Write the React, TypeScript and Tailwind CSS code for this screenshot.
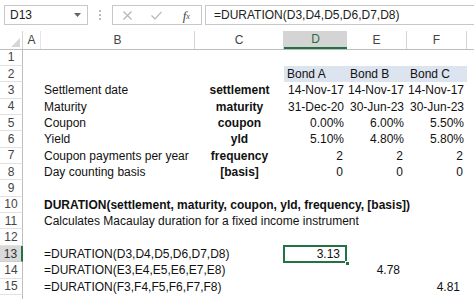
import React from "react";

const ROW_H = "h-[16.36px]";

type Cell = { text?: string; align?: "l" | "r" | "c"; bold?: boolean; fill?: boolean; pr?: string };

function CellBox({ w, c, extra }: { w: string; c?: Cell; extra?: React.ReactNode }) {
  const align = c?.align === "r" ? "justify-end" : c?.align === "c" ? "justify-center" : "justify-start";
  return (
    <div
      className={`${w} shrink-0 relative flex items-center whitespace-nowrap overflow-visible ${align} ${
        c?.fill ? "bg-[#dce4f0]" : ""
      } ${c?.align === "r" ? c?.pr ?? "pr-[3px]" : c?.align === "l" ? "pl-[3px]" : ""} ${c?.bold ? "font-bold" : ""}`}
    >
      {c?.text && <span className="relative z-10">{c.text}</span>}
      {extra}
    </div>
  );
}

const rows: { b?: Cell; c?: Cell; d?: Cell; e?: Cell; f?: Cell }[] = [
  {},
  {
    d: { text: "Bond A", align: "l", fill: true },
    e: { text: "Bond B", align: "l", fill: true },
    f: { text: "Bond C", align: "l", fill: true },
  },
  {
    b: { text: "Settlement date", align: "l" },
    c: { text: "settlement", align: "c", bold: true },
    d: { text: "14-Nov-17", align: "r" },
    e: { text: "14-Nov-17", align: "r" },
    f: { text: "14-Nov-17", align: "r" },
  },
  {
    b: { text: "Maturity", align: "l" },
    c: { text: "maturity", align: "c", bold: true },
    d: { text: "31-Dec-20", align: "r" },
    e: { text: "30-Jun-23", align: "r" },
    f: { text: "30-Jun-23", align: "r" },
  },
  {
    b: { text: "Coupon", align: "l" },
    c: { text: "coupon", align: "c", bold: true },
    d: { text: "0.00%", align: "r" },
    e: { text: "6.00%", align: "r" },
    f: { text: "5.50%", align: "r" },
  },
  {
    b: { text: "Yield", align: "l" },
    c: { text: "yld", align: "c", bold: true },
    d: { text: "5.10%", align: "r" },
    e: { text: "4.80%", align: "r" },
    f: { text: "5.80%", align: "r" },
  },
  {
    b: { text: "Coupon payments per year", align: "l" },
    c: { text: "frequency", align: "c", bold: true },
    d: { text: "2", align: "r", pr: "pr-[4px]" },
    e: { text: "2", align: "r", pr: "pr-[4px]" },
    f: { text: "2", align: "r", pr: "pr-[4px]" },
  },
  {
    b: { text: "Day counting basis", align: "l" },
    c: { text: "[basis]", align: "c", bold: true },
    d: { text: "0", align: "r", pr: "pr-[4px]" },
    e: { text: "0", align: "r", pr: "pr-[4px]" },
    f: { text: "0", align: "r", pr: "pr-[4px]" },
  },
  {},
  { b: { text: "DURATION(settlement, maturity, coupon, yld, frequency, [basis])", align: "l", bold: true } },
  { b: { text: "Calculates Macaulay duration for a fixed income instrument", align: "l" } },
  {},
  { b: { text: "=DURATION(D3,D4,D5,D6,D7,D8)", align: "l" }, d: { text: "3.13", align: "r", pr: "pr-[7px]" } },
  { b: { text: "=DURATION(E3,E4,E5,E6,E7,E8)", align: "l" }, e: { text: "4.78", align: "r", pr: "pr-[7px]" } },
  { b: { text: "=DURATION(F3,F4,F5,F6,F7,F8)", align: "l" }, f: { text: "4.81", align: "r", pr: "pr-[7px]" } },
  {},
];

export default function App() {
  return (
    <div
      className="w-[474px] h-[299px] overflow-hidden bg-white text-[12px] text-[#111] flex flex-col"
      style={{ fontFamily: '"Liberation Sans", Arial, sans-serif' }}
    >
      {/* Formula bar */}
      <div className="h-[31px] shrink-0 flex items-start pt-[5px] pl-[4px] gap-0">
        <div className="w-[84px] h-[20px] border border-[#c8c8c8] flex items-center pl-[5px] pr-[6px] justify-between text-[12px] text-[#222]">
          <span>D13</span>
          <svg width="7" height="4" viewBox="0 0 7 4">
            <path d="M0 0 L7 0 L3.5 4 Z" fill="#666" />
          </svg>
        </div>
        <div className="w-[24px] h-[20px] flex flex-col items-center justify-center gap-[2px]">
          <div className="w-[2px] h-[2px] bg-[#bbb]" />
          <div className="w-[2px] h-[2px] bg-[#bbb]" />
          <div className="w-[2px] h-[2px] bg-[#bbb]" />
        </div>
        <div className="w-[90px] h-[20px] border border-[#c8c8c8] flex items-center">
          <div className="w-[30px] flex justify-center">
            <svg width="9" height="9" viewBox="0 0 9 9">
              <path d="M0.5 0.5 L8.5 8.5 M8.5 0.5 L0.5 8.5" stroke="#b5b5b5" strokeWidth="1.2" />
            </svg>
          </div>
          <div className="w-[30px] flex justify-center">
            <svg width="11" height="9" viewBox="0 0 11 9">
              <path d="M0.5 4.5 L4 8 L10.5 0.8" stroke="#b5b5b5" strokeWidth="1.2" fill="none" />
            </svg>
          </div>
          <div className="w-[30px] flex justify-center items-center text-[#444]" style={{ fontFamily: '"Liberation Serif", serif' }}>
            <span className="italic text-[13px] leading-none">f</span>
            <span className="italic text-[8px] leading-none mt-[4px]">x</span>
          </div>
        </div>
        <div className="flex-1 h-[20px] border border-[#c8c8c8] border-r-0 ml-[3px] flex items-center pl-[8px] text-[12px] text-[#222] whitespace-nowrap">
          =DURATION(D3,D4,D5,D6,D7,D8)
        </div>
      </div>

      {/* Column headers */}
      <div className="h-[18.5px] shrink-0 flex border-b border-[#bdbdbd] text-[#444] text-[12px]">
        <div className="w-[23px] shrink-0 border-r border-[#d4d4d4] relative">
          <svg className="absolute right-[2px] bottom-[2px]" width="9" height="9" viewBox="0 0 9 9">
            <path d="M9 0 L9 9 L0 9 Z" fill="#d6d6d6" />
          </svg>
        </div>
        <div className="w-[18px] shrink-0 border-r border-[#e4e4e4] flex items-center justify-center">A</div>
        <div className="w-[154px] shrink-0 border-r border-[#d4d4d4] flex items-center justify-center">B</div>
        <div className="w-[89px] shrink-0 border-r border-[#d4d4d4] flex items-center justify-center">C</div>
        <div className="w-[63px] shrink-0 bg-[#d4d4d4] border-b-2 border-[#217346] text-[#2e6b45] flex items-center justify-center">D</div>
        <div className="w-[60px] shrink-0 border-r border-[#d4d4d4] flex items-center justify-center">E</div>
        <div className="w-[60px] shrink-0 border-r border-[#d4d4d4] flex items-center justify-center">F</div>
        <div className="flex-1" />
      </div>

      {/* Rows */}
      <div className="flex flex-col">
        {rows.map((r, i) => {
          const n = i + 1;
          const sel = n === 13;
          return (
            <div key={n} className={`${ROW_H} shrink-0 flex`}>
              <div
                className={`w-[23px] shrink-0 flex items-center justify-center border-b text-[12px] ${
                  sel
                    ? "bg-[#d9d9d9] border-r-2 border-r-[#217346] border-b-[#cfcfcf] text-[#333]"
                    : "border-r border-r-[#bdbdbd] border-b-[#e1e1e1] text-[#444]"
                }`}
              >
                {n <= 15 ? n : ""}
              </div>
              <CellBox w="w-[18px]" />
              <CellBox w="w-[154px]" c={r.b} />
              <CellBox w="w-[89px]" c={r.c} />
              <CellBox
                w="w-[63px]"
                c={r.d}
                extra={
                  sel ? (
                    <>
                      <div className="absolute left-[-1px] top-[-1px] right-0 bottom-[-1px] border-2 border-[#217346]" />
                      <div className="absolute right-[-3px] bottom-[-4px] w-[5px] h-[5px] bg-[#217346] border border-white" />
                    </>
                  ) : null
                }
              />
              <CellBox w="w-[60px]" c={r.e} />
              <CellBox w="w-[60px]" c={r.f} />
              <div className="flex-1" />
            </div>
          );
        })}
      </div>
    </div>
  );
}
